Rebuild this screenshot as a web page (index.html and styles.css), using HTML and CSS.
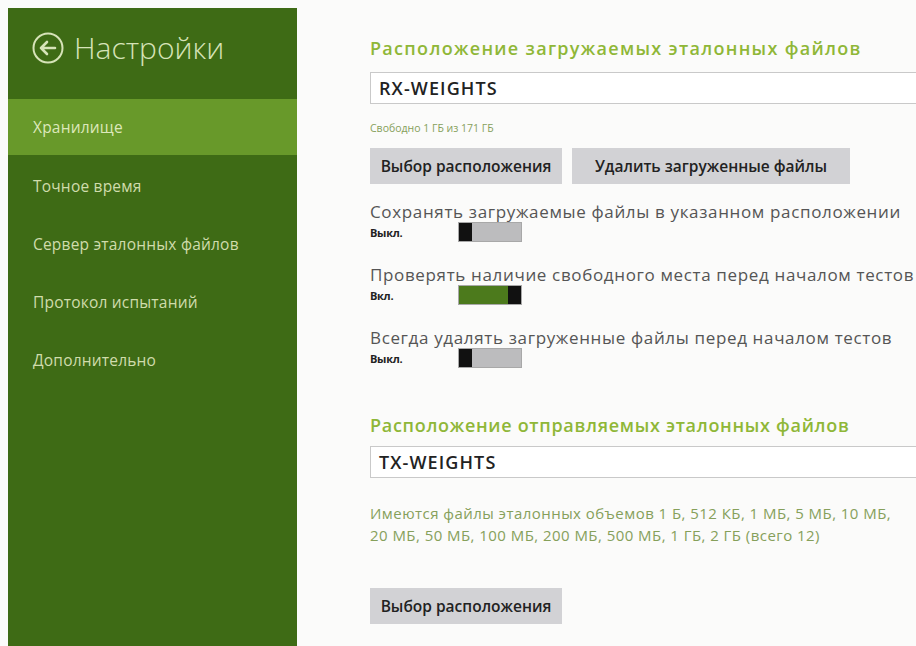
FILE: index.html
```html
<!DOCTYPE html>
<html lang="ru">
<head>
<meta charset="utf-8">
<title>Настройки</title>
<link rel="stylesheet" href="styles.css">
</head>
<body>
<div class="app">
  <aside class="sidebar">
    <header class="sidebar-head">
      <svg class="back" viewBox="0 0 32 32" width="32" height="32" aria-hidden="true">
        <circle cx="16" cy="16" r="14.5" fill="none" stroke="currentColor" stroke-width="2"/>
        <path d="M9 16 H23 M15 10 L9 16 L15 22" fill="none" stroke="currentColor" stroke-width="2.6" stroke-linecap="round" stroke-linejoin="round"/>
      </svg>
      <h1 class="title">Настройки</h1>
    </header>
    <nav class="nav">
      <a class="nav-item active">Хранилище</a>
      <a class="nav-item">Точное время</a>
      <a class="nav-item">Сервер эталонных файлов</a>
      <a class="nav-item">Протокол испытаний</a>
      <a class="nav-item">Дополнительно</a>
    </nav>
  </aside>

  <main class="content">
    <h2 class="section-title">Расположение загружаемых эталонных файлов</h2>
    <div class="field">RX-WEIGHTS</div>
    <p class="hint hint-free">Свободно 1 ГБ из 171 ГБ</p>
    <div class="buttons">
      <button class="btn">Выбор расположения</button>
      <button class="btn btn-wide">Удалить загруженные файлы</button>
    </div>

    <div class="option first">
      <div class="option-label">Сохранять загружаемые файлы в указанном расположении</div>
      <div class="toggle-row"><span class="state">Выкл.</span><span class="toggle off"><span class="thumb"></span></span></div>
    </div>
    <div class="option">
      <div class="option-label">Проверять наличие свободного места перед началом тестов</div>
      <div class="toggle-row"><span class="state">Вкл.</span><span class="toggle on"><span class="thumb"></span></span></div>
    </div>
    <div class="option">
      <div class="option-label">Всегда удалять загруженные файлы перед началом тестов</div>
      <div class="toggle-row"><span class="state">Выкл.</span><span class="toggle off"><span class="thumb"></span></span></div>
    </div>

    <h2 class="section-title second">Расположение отправляемых эталонных файлов</h2>
    <div class="field field-tx">TX-WEIGHTS</div>
    <p class="hint hint-list">Имеются файлы эталонных объемов 1 Б, 512 КБ, 1 МБ, 5 МБ, 10 МБ,<br>20 МБ, 50 МБ, 100 МБ, 200 МБ, 500 МБ, 1 ГБ, 2 ГБ (всего 12)</p>
    <div class="buttons last">
      <button class="btn">Выбор расположения</button>
    </div>
  </main>
</div>
</body>
</html>
```

FILE: styles.css
```css
* { box-sizing: border-box; }

html, body {
  margin: 0;
  height: 100%;
  overflow: hidden;
}

body {
  background: #fbfbfa;
  font-family: "Open Sans", "Noto Sans", sans-serif;
  color: #333;
}

.app {
  display: flex;
  padding: 8px 0 0 8px;
  height: 100%;
}

/* ---------- sidebar ---------- */
.sidebar {
  width: 289px;
  flex: none;
  background: #3e6b15;
  color: #d3dfb4;
}

.sidebar-head {
  display: flex;
  align-items: center;
  gap: 10px;
  height: 91px;
  padding: 0 0 12px 24px;
}

.back {
  color: #d6e3b8;
  flex: none;
}

.title {
  margin: 0;
  font-weight: 300;
  font-size: 30px;
  line-height: 36px;
  color: #d6e3b8;
}

.nav {
  display: flex;
  flex-direction: column;
}

.nav-item {
  display: flex;
  align-items: center;
  height: 58px;
  padding-left: 25px;
  font-size: 15.5px;
  letter-spacing: 0.2px;
  color: #d0dcac;
}

.nav-item.active {
  height: 56px;
  margin-bottom: 2px;
  background: #68992a;
  color: #dde8bb;
}

/* ---------- content ---------- */
.content {
  margin-left: 73px;
  flex: 1;
  min-width: 0;
  padding-top: 30px;
}

.section-title {
  margin: 0;
  font-size: 18px;
  font-weight: 600;
  line-height: 20px;
  letter-spacing: 1.3px;
  color: #8fb737;
  white-space: nowrap;
}

.section-title.second {
  margin-top: 47px;
  letter-spacing: 0.7px;
}

.field {
  margin-top: 14px;
  height: 32px;
  border: 1px solid #c9c9c9;
  border-right: 0;
  background: #fff;
  padding: 0 8px;
  font-size: 18px;
  font-weight: 600;
  letter-spacing: 1.1px;
  line-height: 30px;
  color: #222;
}

.field-tx { margin-top: 11px; }

.hint {
  margin: 16px 0 0;
  font-size: 10.5px;
  line-height: 16px;
  color: #86a05a;
}

.hint-list {
  margin-top: 24px;
  line-height: 22px;
  font-size: 15px;
  letter-spacing: 0.45px;
}

.buttons {
  display: flex;
  gap: 10px;
  margin-top: 12px;
}

.buttons.last { margin-top: 42px; }

.btn {
  height: 36px;
  border: 0;
  background: #d2d2d5;
  font-family: inherit;
  font-size: 15.5px;
  font-weight: 600;
  color: #222;
  padding: 0 4px;
  width: 192px;
  white-space: nowrap;
}

.btn-wide { width: 278px; }

.option { margin-top: 23px; }
.option.first { margin-top: 18px; }

.option-label {
  font-size: 17px;
  line-height: 20px;
  letter-spacing: 0.65px;
  color: #555;
  white-space: nowrap;
}

.toggle-row {
  display: flex;
  align-items: center;
  height: 20px;
}

.state {
  width: 88px;
  font-size: 11px;
  font-weight: 700;
  letter-spacing: -0.3px;
  color: #222;
}

.toggle {
  display: flex;
  width: 64px;
  height: 20px;
  border: 1px solid #a8a8a8;
  background: #bcbcbe;
}

.toggle .thumb {
  width: 13px;
  height: 100%;
  background: #111;
}

.toggle.on {
  background: #4c7a1c;
  justify-content: flex-end;
}
```
